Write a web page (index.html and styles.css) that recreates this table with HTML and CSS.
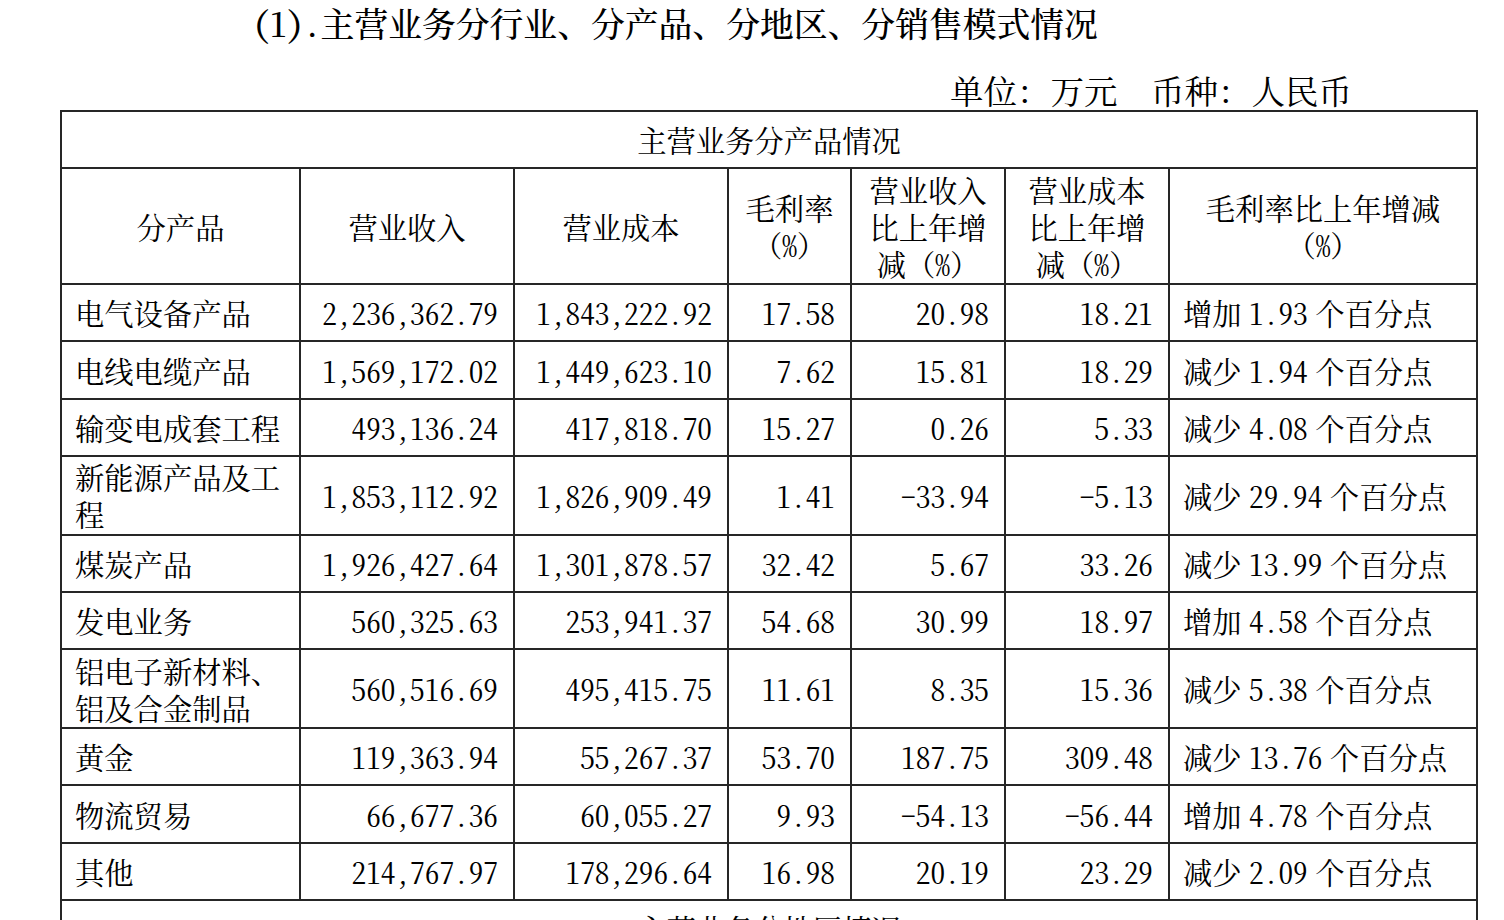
FILE: index.html
```html
<!DOCTYPE html>
<html lang="zh-CN">
<head>
<meta charset="utf-8">
<title>主营业务分行业、分产品、分地区、分销售模式情况</title>
<link rel="stylesheet" href="styles.css">
</head>
<body>
<div class="page">
  <h1 class="title"><span class="num">(1).</span>主营业务分行业、分产品、分地区、分销售模式情况</h1>
  <p class="unit">单位：万元　币种：人民币</p>
  <table class="report">
    <colgroup>
      <col class="c1"><col class="c2"><col class="c3"><col class="c4"><col class="c5"><col class="c6"><col class="c7">
    </colgroup>
    <tr class="r-section"><td colspan="7" class="section">主营业务分产品情况</td></tr>
    <tr class="r-head">
      <th>分产品</th>
      <th>营业收入</th>
      <th>营业成本</th>
      <th>毛利率<br>（<span class="num">%</span>）</th>
      <th>营业收入<br>比上年增<br>减（<span class="num">%</span>）</th>
      <th>营业成本<br>比上年增<br>减（<span class="num">%</span>）</th>
      <th>毛利率比上年增减<br>（<span class="num">%</span>）</th>
    </tr>
    <tr class="r1"><td class="name">电气设备产品</td><td class="n">2,236,362.79</td><td class="n">1,843,222.92</td><td class="n">17.58</td><td class="n">20.98</td><td class="n">18.21</td><td class="name">增加 <span class="num">1.93</span> 个百分点</td></tr>
    <tr class="r1"><td class="name">电线电缆产品</td><td class="n">1,569,172.02</td><td class="n">1,449,623.10</td><td class="n">7.62</td><td class="n">15.81</td><td class="n">18.29</td><td class="name">减少 <span class="num">1.94</span> 个百分点</td></tr>
    <tr class="r1"><td class="name">输变电成套工程</td><td class="n">493,136.24</td><td class="n">417,818.70</td><td class="n">15.27</td><td class="n">0.26</td><td class="n">5.33</td><td class="name">减少 <span class="num">4.08</span> 个百分点</td></tr>
    <tr class="r2"><td class="name">新能源产品及工<br>程</td><td class="n">1,853,112.92</td><td class="n">1,826,909.49</td><td class="n">1.41</td><td class="n">-33.94</td><td class="n">-5.13</td><td class="name">减少 <span class="num">29.94</span> 个百分点</td></tr>
    <tr class="r1"><td class="name">煤炭产品</td><td class="n">1,926,427.64</td><td class="n">1,301,878.57</td><td class="n">32.42</td><td class="n">5.67</td><td class="n">33.26</td><td class="name">减少 <span class="num">13.99</span> 个百分点</td></tr>
    <tr class="r1"><td class="name">发电业务</td><td class="n">560,325.63</td><td class="n">253,941.37</td><td class="n">54.68</td><td class="n">30.99</td><td class="n">18.97</td><td class="name">增加 <span class="num">4.58</span> 个百分点</td></tr>
    <tr class="r2"><td class="name">铝电子新材料、<br>铝及合金制品</td><td class="n">560,516.69</td><td class="n">495,415.75</td><td class="n">11.61</td><td class="n">8.35</td><td class="n">15.36</td><td class="name">减少 <span class="num">5.38</span> 个百分点</td></tr>
    <tr class="r1"><td class="name">黄金</td><td class="n">119,363.94</td><td class="n">55,267.37</td><td class="n">53.70</td><td class="n">187.75</td><td class="n">309.48</td><td class="name">减少 <span class="num">13.76</span> 个百分点</td></tr>
    <tr class="r1"><td class="name">物流贸易</td><td class="n">66,677.36</td><td class="n">60,055.27</td><td class="n">9.93</td><td class="n">-54.13</td><td class="n">-56.44</td><td class="name">增加 <span class="num">4.78</span> 个百分点</td></tr>
    <tr class="r1"><td class="name">其他</td><td class="n">214,767.97</td><td class="n">178,296.64</td><td class="n">16.98</td><td class="n">20.19</td><td class="n">23.29</td><td class="name">减少 <span class="num">2.09</span> 个百分点</td></tr>
    <tr class="r-section"><td colspan="7" class="section">主营业务分地区情况</td></tr>
  </table>
</div>
</body>
</html>
```
FILE: styles.css
```css
html, body {
  margin: 0;
  padding: 0;
  background: #ffffff;
}

body {
  font-family: "Noto Serif CJK SC", "Source Han Serif SC", "AR PL UMing CN", "Noto Sans CJK SC", serif;
  color: #000000;
  overflow: hidden;
}

.page {
  width: 1416px;
  margin-left: 60px;
}

.num {
  font-feature-settings: "hwid" 1;
}

.title {
  margin: 0;
  padding-left: 193px;
  font-size: 33.8px;
  line-height: 46px;
  font-weight: 500;
  white-space: nowrap;
}

.unit {
  margin: 24px 0 0 0;
  padding-right: 124px;
  text-align: right;
  font-size: 33.5px;
  line-height: 40px;
  white-space: nowrap;
}

.report {
  border-collapse: collapse;
  table-layout: fixed;
  width: 1416px;
  font-size: 29.3px;
  line-height: 37px;
}

.c1 { width: 239px; }
.c2 { width: 214px; }
.c3 { width: 214px; }
.c4 { width: 123px; }
.c5 { width: 154px; }
.c6 { width: 164px; }
.c7 { width: 308px; }

.report td,
.report th {
  border: 2px solid #262626;
  padding: 0;
  vertical-align: middle;
  font-weight: normal;
  white-space: nowrap;
}

.report th {
  text-align: center;
}

.report .r-section td {
  height: 55px;
}

.report .r-head th {
  height: 114px;
}

.report .r1 td {
  height: 55.4px;
}

.report .r2 td {
  height: 76.5px;
}

.report .section {
  text-align: center;
}

.report .name {
  text-align: left;
  padding-left: 13px;
}

.report .n {
  text-align: right;
  padding-right: 15px;
  font-feature-settings: "hwid" 1;
}
```
